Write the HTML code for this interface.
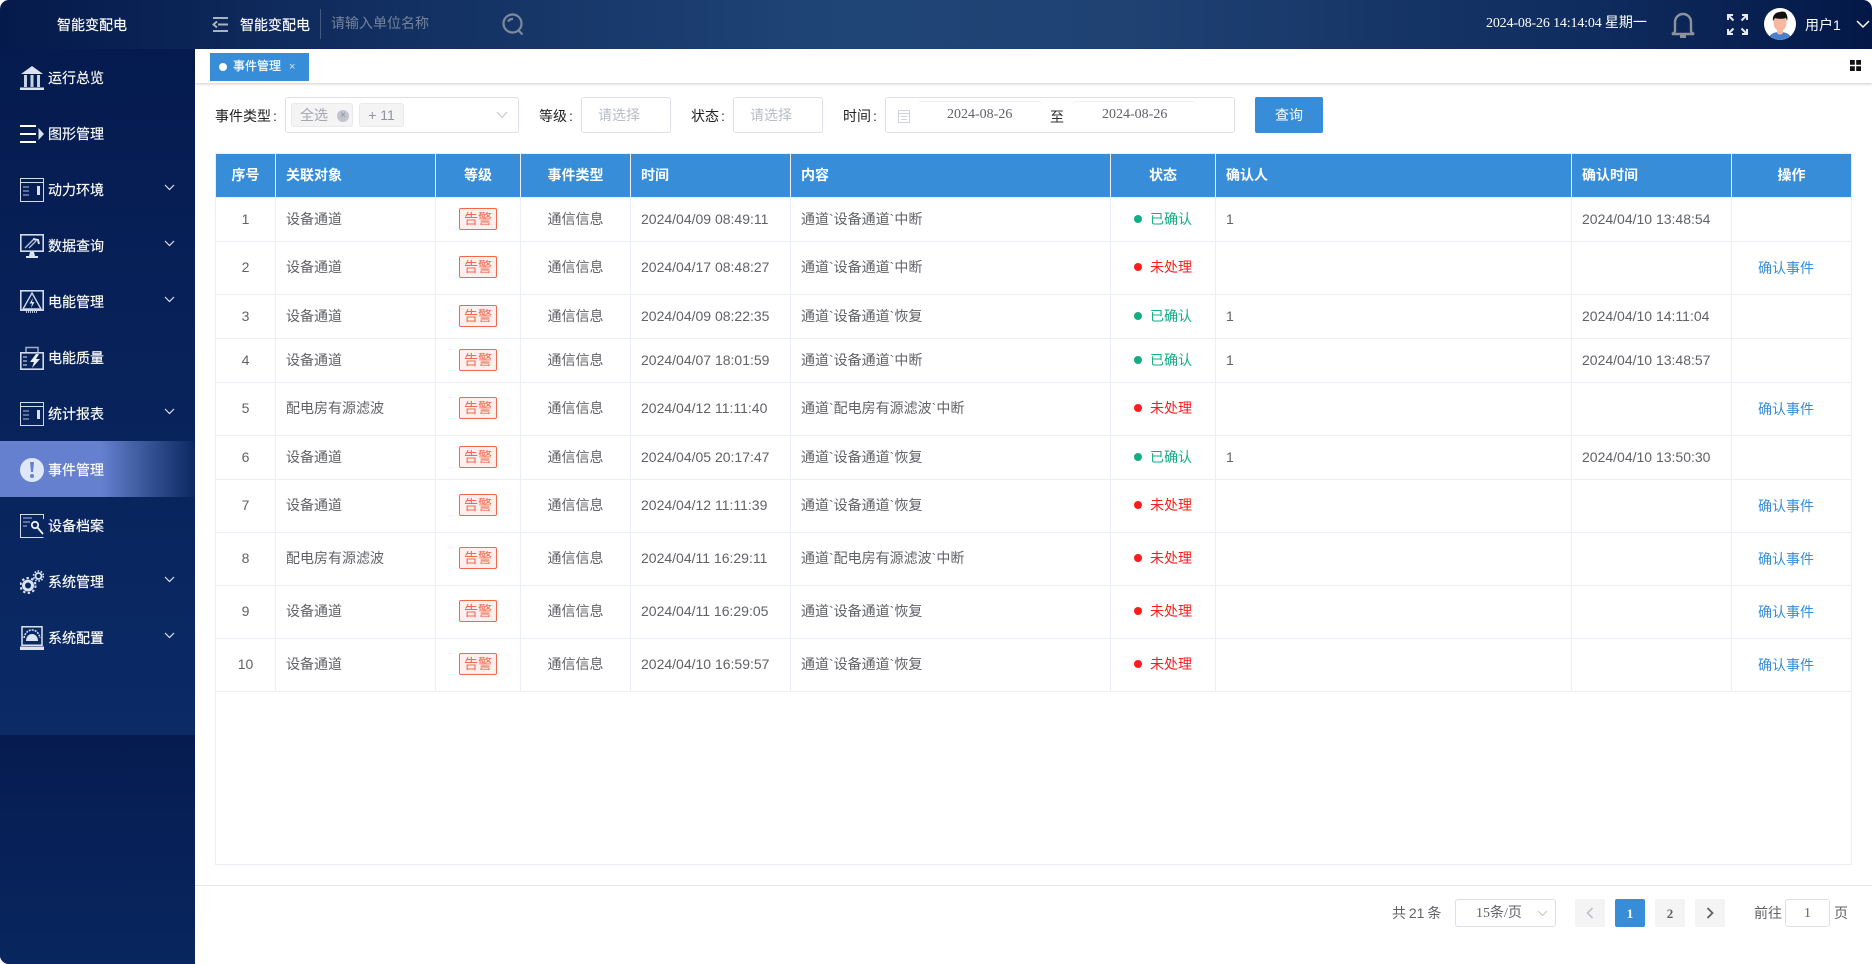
<!DOCTYPE html>
<html lang="zh-CN"><head><meta charset="utf-8"><title>智能变配电</title>
<style>
*{box-sizing:border-box;margin:0;padding:0}
html,body{width:1872px;height:964px;overflow:hidden;background:#fff}
body{font:14px/1.2 "Liberation Sans","Noto Sans CJK SC",sans-serif;color:#606266;position:relative}
.a{position:absolute;white-space:nowrap}
#frame{position:absolute;inset:0;border-radius:9px;overflow:hidden;background:#fff}
#top{position:absolute;left:0;top:0;width:1872px;height:49px;background:linear-gradient(90deg,#041a4b 0,#0f2a5c 15%,#1f4576 45%,#1f4273 60%,#0f2c5e 85%,#031847 100%)}
#side{position:absolute;left:0;top:49px;width:195px;height:915px;background:#061c50}
#sidetop{position:absolute;left:0;top:0;width:195px;height:686px;background:linear-gradient(180deg,#051b4f 0,#0b2a66 100%)}
#sidebot{position:absolute;left:0;top:686px;width:195px;height:229px;background:linear-gradient(180deg,#061c50 0,#08265f 100%)}
.it{position:absolute;left:0;width:195px;height:56px;color:#fff}
.it span{position:absolute;left:48px;top:20px;line-height:18px;font-size:14px;-webkit-text-stroke:.15px #fff}
.it svg.ic{position:absolute;left:20px;top:17px}
.it svg.ch{position:absolute;left:164px;top:23px}
.on{background:linear-gradient(90deg,#6580cf 0,#6580cf 52%,#3d5b9e 72%,#0c2860 100%)}
#tabs{position:absolute;left:195px;top:49px;width:1677px;height:34px;background:#fff;box-shadow:0 1px 3px rgba(0,0,0,.2)}
.box{position:absolute;border:1px solid #dcdfe6;border-radius:3px;background:#fff;height:36px;top:97px}
.lbl{position:absolute;top:107px;line-height:18px;color:#222;white-space:nowrap}
.lbl b{font-weight:400;margin-left:2px}
.ph{position:absolute;top:106px;line-height:18px;color:#b8bcc6}
table{position:absolute;left:215px;top:153px;width:1637px;table-layout:fixed;border-collapse:separate;border-spacing:0}
th{background:#378dd8;color:#fff;font-weight:700;height:45px;border-right:1px solid #ebeef5;border-top:1px solid #ebeef5;border-bottom:1px solid #ebeef5;text-align:left;padding:0 0 0 10px;font-size:14px}
th.c,td.c{text-align:center;padding:0 0 2px 0}
th.c{padding:0}
td{border-right:1px solid #ebeef5;border-bottom:1px solid #ebeef5;padding:0 0 2px 10px;color:#606266;font-size:14px;white-space:nowrap;line-height:16px}
tr>*:first-child{border-left:1px solid #ebeef5}
.s td{height:44px}.t td{height:53px}
.tg{display:inline-block;width:38px;height:22px;line-height:20px;border:1px solid #f5674a;border-radius:2px;background:#fff0ef;color:#f5674a;text-align:center;vertical-align:middle}
.d{display:inline-block;width:8px;height:8px;border-radius:50%;margin:0 8px 2px 0;vertical-align:middle}
.g{color:#13ad85;padding-left:23px!important}.g .d{background:#13ad85}
.r{color:#fd1c1c;padding-left:23px!important}.r .d{background:#fd1c1c}
.op{color:#378dd8;padding-left:26px!important;padding-bottom:1px!important}
.pg{position:absolute;top:899px;height:28px;width:30px;border-radius:2px;background:#f4f4f5;text-align:center;line-height:28px;font-family:"Liberation Serif",serif;font-weight:700;font-size:13px;color:#606266}
</style></head><body>
<div id="frame">
<div id="top"></div>
<div class="a" style="left:57px;top:16px;color:#fff;line-height:18px;-webkit-text-stroke:.15px #fff">智能变配电</div>
<svg class="a" style="left:212px;top:16px" width="17" height="17" viewBox="0 0 17 17" fill="none" stroke="#a8b3c4" stroke-width="2"><path d="M1 2h15M6 8.500h10M1 15h15M5 5.500 1.500 8.500 5 11.500"/></svg>
<div class="a" style="left:240px;top:16px;color:#fff;line-height:18px;-webkit-text-stroke:.15px #fff">智能变配电</div>
<div class="a" style="left:320px;top:9px;width:1px;height:30px;background:#41597f"></div>
<div class="a" style="left:331px;top:14px;color:#75839a;line-height:18px">请输入单位名称</div>
<svg class="a" style="left:501px;top:12px" width="24" height="24" viewBox="0 0 24 24" fill="none" stroke="#7d8a9c" stroke-width="2.200"><circle cx="11.500" cy="11.500" r="9"/><path d="M7 9.500a5.500 5.500 0 0 1 5-2.500M17 18l4.500 4.500"/></svg>
<div class="a" style="left:1486px;top:15px;color:#fff;line-height:18px;font-family:'Liberation Serif','Noto Sans CJK SC',serif"><span style="letter-spacing:-.16px">2024-08-26 14:14:04 </span>星期一</div>
<svg class="a" style="left:1670px;top:12px" width="26" height="26" viewBox="0 0 26 26" fill="none" stroke="#8d929b" stroke-width="2.400"><path d="M5 19V10a8 8 0 0 1 16 0v9c0 1 1 2 3 3H2c2-1 3-2 3-3z"/><path d="M10 24.500h6" stroke-width="3"/></svg>
<svg class="a" style="left:1727px;top:14px" width="21" height="21" viewBox="0 0 21 21" fill="none" stroke="#e6eaf0" stroke-width="2"><path d="M1 6V1h5M1 1l5.500 5.500M20 6V1h-5M20 1l-5.500 5.500M1 15v5h5M1 20l5.500-5.500M20 15v5h-5M20 20l-5.500-5.500"/></svg>
<svg class="a" style="left:1764px;top:8px" width="32" height="32" viewBox="0 0 32 32"><defs><clipPath id="av"><circle cx="16" cy="16" r="16"/></clipPath></defs><g clip-path="url(#av)"><rect width="32" height="32" fill="#fff"/><path d="M4 32c1-6 6-8 12-8s11 2 12 8z" fill="#4a7fd0"/><path d="M13 21h6v4c-1 2-5 2-6 0z" fill="#f0b9a0"/><ellipse cx="16" cy="15" rx="6.500" ry="8" fill="#f5b8a0"/><path d="M9 13c-1-6 3-9 7-9 2-1 4 0 5 0 2 2 3 5 2 9l-1-3c-3 1-8 1-11 0z" fill="#111"/></g></svg>
<div class="a" style="left:1805px;top:16px;color:#fff;line-height:18px">用户1</div>
<svg class="a" style="left:1856px;top:20px" width="14" height="9" viewBox="0 0 14 9" fill="none" stroke="#fff" stroke-width="1.500"><path d="M1 1l6 6 6-6"/></svg>

<div id="side"><div id="sidetop"></div><div id="sidebot"></div></div>

<div class="it" style="top:49px"><svg class="ic" width="24" height="24" viewBox="0 0 24 24" fill="#dbe3f0"><path d="M12 0 23 8H1z"/><path d="M4 9h3v12H4zM10.500 9h3v12h-3zM17 9h3v12h-3z" fill="#c5d0e2"/><path d="M0 21.500h24V24H0z"/></svg><span>运行总览</span></div>
<div class="it" style="top:105px"><svg class="ic" width="24" height="24" viewBox="0 0 24 24" fill="#fff"><path d="M0 3h16v2H0zM0 11h16v2H0zM0 19h16v2H0z"/><path d="M18.500 6 24 12l-5.500 6z" fill="#dbe3f0"/></svg><span>图形管理</span></div>
<div class="it" style="top:161px"><svg class="ic" width="24" height="24" viewBox="0 0 24 24" fill="none" stroke="#d0daea"><path d="M.5.500h23v23H.500zM.5 4.500h23"/><path d="M3 9h6M3 13h6M3 17h6" stroke="#8fa0bd" stroke-width="1.300"/><path d="M17 8h3v9h-3z" fill="#dbe3f0" stroke="none"/></svg><span>动力环境</span><svg class="ch" width="11" height="7" viewBox="0 0 11 7" fill="none" stroke="#dbe3f0" stroke-width="1.200"><path d="M1 1l4.500 4.500L10 1"/></svg></div>
<div class="it" style="top:217px"><svg class="ic" width="24" height="24" viewBox="0 0 24 24" fill="none" stroke="#d0daea"><path d="M.8.800h22.400v16.400H.800z" stroke-width="1.600"/><path d="M5 14 14 5M9 14l7-7" stroke="#b7c4d9" stroke-width="1.300"/><path d="M13 5l5 1 1 4" stroke="#dbe3f0" stroke-width="2"/><path d="M10 18h4l1 4H9zM6 22h12v2H6z" fill="#dbe3f0" stroke="none"/></svg><span>数据查询</span><svg class="ch" width="11" height="7" viewBox="0 0 11 7" fill="none" stroke="#dbe3f0" stroke-width="1.200"><path d="M1 1l4.500 4.500L10 1"/></svg></div>
<div class="it" style="top:273px"><svg class="ic" width="24" height="24" viewBox="0 0 24 24" fill="none" stroke="#d0daea"><path d="M.8.800h22.400v19.400H.800z" stroke-width="1.600"/><path d="M12 3 21 19H3z" stroke-width="1.400"/><path d="M13 8l-3.500 5.500h2.500L11 18l3.500-6H12z" fill="#dbe3f0" stroke="none"/><path d="M6 22h12" stroke-dasharray="1 1" stroke-width="2" stroke="#b7c4d9"/></svg><span>电能管理</span><svg class="ch" width="11" height="7" viewBox="0 0 11 7" fill="none" stroke="#dbe3f0" stroke-width="1.200"><path d="M1 1l4.500 4.500L10 1"/></svg></div>
<div class="it" style="top:329px"><svg class="ic" width="24" height="24" viewBox="0 0 24 24" fill="none" stroke="#d0daea"><path d="M.8 6.800h22.400v16.400H.800z" stroke-width="1.600"/><path d="M6 6V1.500h12V6" stroke="#9fafc8" stroke-width="1.500"/><path d="M3 11h4M3 15h4M3 19h4" stroke="#b7c4d9" stroke-width="1.300"/><path d="M16 8l-6 8h4l-2 6 8-9h-4l3-5z" fill="#eef2f8" stroke="none"/></svg><span>电能质量</span></div>
<div class="it" style="top:385px"><svg class="ic" width="24" height="24" viewBox="0 0 24 24" fill="none" stroke="#d0daea"><path d="M.5.500h23v23H.500zM.5 4.500h23"/><path d="M3 9h6M3 13h6M3 17h6" stroke="#8fa0bd" stroke-width="1.300"/><path d="M17 8h3v9h-3z" fill="#dbe3f0" stroke="none"/></svg><span>统计报表</span><svg class="ch" width="11" height="7" viewBox="0 0 11 7" fill="none" stroke="#dbe3f0" stroke-width="1.200"><path d="M1 1l4.500 4.500L10 1"/></svg></div>
<div class="it on" style="top:441px"><svg class="ic" width="24" height="24" viewBox="0 0 24 24"><circle cx="12" cy="12" r="12" fill="#dfe8f6"/><path d="M10 4h4l-1 10h-2z" fill="#6580cf"/><circle cx="12" cy="18" r="2" fill="#6580cf"/></svg><span>事件管理</span></div>
<div class="it" style="top:497px"><svg class="ic" width="24" height="24" viewBox="0 0 24 24" fill="none" stroke="#d0daea"><path d="M23.500 5V.500H.500v23H23.500"/><path d="M3 4h9M3 8h7M3 12h4" stroke="#8fa0bd" stroke-width="1.200"/><circle cx="15" cy="11" r="3.200" stroke-width="1.800" stroke="#eef2f8"/><path d="M17.500 13.500 23 20" stroke-width="1.800" stroke="#eef2f8"/></svg><span>设备档案</span></div>
<div class="it" style="top:553px"><svg class="ic" width="24" height="24" viewBox="0 0 24 24" fill="none" stroke="#dbe3f0"><circle cx="8" cy="15.500" r="4.500" stroke-width="3"/><circle cx="8" cy="15.500" r="7.500" stroke-width="2" stroke-dasharray="2.400 2.400"/><circle cx="18.500" cy="6" r="3" stroke-width="1.800"/><circle cx="18.500" cy="6" r="5" stroke-width="1.600" stroke-dasharray="1.600 1.600"/></svg><span>系统管理</span><svg class="ch" width="11" height="7" viewBox="0 0 11 7" fill="none" stroke="#dbe3f0" stroke-width="1.200"><path d="M1 1l4.500 4.500L10 1"/></svg></div>
<div class="it" style="top:609px"><svg class="ic" width="24" height="24" viewBox="0 0 24 24" fill="none" stroke="#dbe3f0"><path d="M2 .8h20v18.400H2z" stroke-width="1.500"/><path d="M6 15c0-4 2.500-7 6-7s6 3 6 7z" fill="#dbe3f0" stroke="none"/><path d="M4 12c1-5 4-8 8-8s7 3 8 8" stroke-width="1.500" stroke-dasharray="2 1"/><path d="M0 20.500h24V24H0z" fill="#dbe3f0" stroke="none"/></svg><span>系统配置</span><svg class="ch" width="11" height="7" viewBox="0 0 11 7" fill="none" stroke="#dbe3f0" stroke-width="1.200"><path d="M1 1l4.500 4.500L10 1"/></svg></div>

<div id="tabs"></div>
<div class="a" style="left:210px;top:53px;width:99px;height:28px;background:#378dd8;color:#fff">
<i class="a" style="left:9px;top:10px;width:8px;height:8px;border-radius:50%;background:#fff"></i>
<span class="a" style="left:23px;top:5px;font-size:12px;line-height:16px;-webkit-text-stroke:.15px #fff">事件管理</span>
<span class="a" style="left:79px;top:6px;font-size:11px;line-height:16px;color:#d5e6f7">×</span></div>
<svg class="a" style="left:1850px;top:60px" width="11" height="11" viewBox="0 0 11 11" fill="#111"><path d="M0 0h4.800v4.800H0zM6.200 0H11v4.800H6.200zM0 6.200h4.800V11H0zM6.200 6.200H11V11H6.200z"/></svg>

<div class="lbl" style="left:215px">事件类型<b>:</b></div>
<div class="box" style="left:285px;width:234px"></div>
<div class="a" style="left:291px;top:103px;width:62px;height:24px;background:#f4f4f5;border:1px solid #e9e9eb;border-radius:3px;color:#a3a6ad;line-height:22px;padding-left:8px">全选<i class="a" style="left:45px;top:6px;width:12px;height:12px;border-radius:50%;background:#c0c4cc;color:#8b8f98;font:10px/12px 'Liberation Sans';text-align:center">×</i></div>
<div class="a" style="left:359px;top:103px;width:45px;height:24px;background:#f4f4f5;border:1px solid #e9e9eb;border-radius:3px;color:#909399;line-height:22px;text-align:center">+ 11</div>
<svg class="a" style="left:496px;top:111px" width="12" height="8" viewBox="0 0 12 8" fill="none" stroke="#c0c4cc"><path d="M1 1l5 5.500L11 1"/></svg>
<div class="lbl" style="left:539px">等级<b>:</b></div>
<div class="box" style="left:581px;width:90px"></div><div class="ph" style="left:598px">请选择</div>
<div class="lbl" style="left:691px">状态<b>:</b></div>
<div class="box" style="left:733px;width:90px"></div><div class="ph" style="left:750px">请选择</div>
<div class="lbl" style="left:843px">时间<b>:</b></div>
<div class="box" style="left:885px;width:350px"></div>
<svg class="a" style="left:897px;top:109px" width="14" height="14" viewBox="0 0 14 14" fill="none" stroke="#d0d3da"><path d="M1.500 1.500h11v12h-11zM1.500 4.500h11M4 7.500h6M4 10.500h6"/></svg>
<div class="a" style="left:916px;top:101px;width:128px;height:12px;border-top:1px solid #eef0f4;border-radius:6px 6px 0 0"></div>
<div class="a" style="left:1071px;top:101px;width:126px;height:12px;border-top:1px solid #eef0f4;border-radius:6px 6px 0 0"></div>
<div class="a" style="left:947px;top:106px;line-height:18px;font-family:'Liberation Serif',serif;color:#606266">2024-08-26</div>
<div class="a" style="left:1050px;top:108px;line-height:18px;color:#303133">至</div>
<div class="a" style="left:1102px;top:106px;line-height:18px;font-family:'Liberation Serif',serif;color:#606266">2024-08-26</div>
<div class="a" style="left:1255px;top:97px;width:68px;height:36px;background:#378dd8;border-radius:2px;color:#fff;text-align:center;line-height:36px">查询</div>

<table><colgroup><col style="width:61px"><col style="width:160px"><col style="width:85px"><col style="width:110px"><col style="width:160px"><col style="width:320px"><col style="width:105px"><col style="width:356px"><col style="width:160px"><col style="width:120px"></colgroup>
<tr><th class="c">序号</th><th>关联对象</th><th class="c">等级</th><th class="c">事件类型</th><th>时间</th><th>内容</th><th class="c">状态</th><th>确认人</th><th>确认时间</th><th class="c">操作</th></tr>
<tr class="s"><td class="c">1</td><td>设备通道</td><td class="c"><span class="tg">告警</span></td><td class="c">通信信息</td><td>2024/04/09 08:49:11</td><td>通道`设备通道`中断</td><td class="g"><i class="d"></i>已确认</td><td>1</td><td>2024/04/10 13:48:54</td><td></td></tr>
<tr class="t"><td class="c">2</td><td>设备通道</td><td class="c"><span class="tg">告警</span></td><td class="c">通信信息</td><td>2024/04/17 08:48:27</td><td>通道`设备通道`中断</td><td class="r"><i class="d"></i>未处理</td><td></td><td></td><td class="op">确认事件</td></tr>
<tr class="s"><td class="c">3</td><td>设备通道</td><td class="c"><span class="tg">告警</span></td><td class="c">通信信息</td><td>2024/04/09 08:22:35</td><td>通道`设备通道`恢复</td><td class="g"><i class="d"></i>已确认</td><td>1</td><td>2024/04/10 14:11:04</td><td></td></tr>
<tr class="s"><td class="c">4</td><td>设备通道</td><td class="c"><span class="tg">告警</span></td><td class="c">通信信息</td><td>2024/04/07 18:01:59</td><td>通道`设备通道`中断</td><td class="g"><i class="d"></i>已确认</td><td>1</td><td>2024/04/10 13:48:57</td><td></td></tr>
<tr class="t"><td class="c">5</td><td>配电房有源滤波</td><td class="c"><span class="tg">告警</span></td><td class="c">通信信息</td><td>2024/04/12 11:11:40</td><td>通道`配电房有源滤波`中断</td><td class="r"><i class="d"></i>未处理</td><td></td><td></td><td class="op">确认事件</td></tr>
<tr class="s"><td class="c">6</td><td>设备通道</td><td class="c"><span class="tg">告警</span></td><td class="c">通信信息</td><td>2024/04/05 20:17:47</td><td>通道`设备通道`恢复</td><td class="g"><i class="d"></i>已确认</td><td>1</td><td>2024/04/10 13:50:30</td><td></td></tr>
<tr class="t"><td class="c">7</td><td>设备通道</td><td class="c"><span class="tg">告警</span></td><td class="c">通信信息</td><td>2024/04/12 11:11:39</td><td>通道`设备通道`恢复</td><td class="r"><i class="d"></i>未处理</td><td></td><td></td><td class="op">确认事件</td></tr>
<tr class="t"><td class="c">8</td><td>配电房有源滤波</td><td class="c"><span class="tg">告警</span></td><td class="c">通信信息</td><td>2024/04/11 16:29:11</td><td>通道`配电房有源滤波`中断</td><td class="r"><i class="d"></i>未处理</td><td></td><td></td><td class="op">确认事件</td></tr>
<tr class="t"><td class="c">9</td><td>设备通道</td><td class="c"><span class="tg">告警</span></td><td class="c">通信信息</td><td>2024/04/11 16:29:05</td><td>通道`设备通道`恢复</td><td class="r"><i class="d"></i>未处理</td><td></td><td></td><td class="op">确认事件</td></tr>
<tr class="t"><td class="c">10</td><td>设备通道</td><td class="c"><span class="tg">告警</span></td><td class="c">通信信息</td><td>2024/04/10 16:59:57</td><td>通道`设备通道`恢复</td><td class="r"><i class="d"></i>未处理</td><td></td><td></td><td class="op">确认事件</td></tr>
</table>
<div class="a" style="left:215px;top:691px;width:1637px;height:174px;border:1px solid #ebeef5;border-top:0"></div>
<div class="a" style="left:195px;top:885px;width:1677px;height:1px;background:#e4e7ed"></div>

<div class="a" style="left:1392px;top:904px;line-height:18px;word-spacing:-1px">共 21 条</div>
<div class="a" style="left:1455px;top:899px;width:101px;height:28px;border:1px solid #dcdfe6;border-radius:3px;font-family:'Liberation Serif','Noto Sans CJK SC',serif;line-height:28px;padding-left:20px">15条/页</div>
<svg class="a" style="left:1537px;top:910px" width="11" height="7" viewBox="0 0 11 7" fill="none" stroke="#c0c4cc"><path d="M1 1l4.500 4.500L10 1"/></svg>
<div class="pg" style="left:1575px"><svg width="8" height="12" viewBox="0 0 8 12" fill="none" stroke="#c0c4cc" stroke-width="1.800" style="margin-top:8px"><path d="M6.500 1 1.500 6l5 5"/></svg></div>
<div class="pg" style="left:1615px;background:#378dd8;color:#fff;line-height:30px">1</div>
<div class="pg" style="left:1655px;line-height:30px">2</div>
<div class="pg" style="left:1695px"><svg width="8" height="12" viewBox="0 0 8 12" fill="none" stroke="#606266" stroke-width="1.800" style="margin-top:8px"><path d="M1.500 1l5 5-5 5"/></svg></div>
<div class="a" style="left:1754px;top:904px;line-height:18px">前往</div>
<div class="a" style="left:1785px;top:899px;width:45px;height:28px;border:1px solid #dcdfe6;border-radius:3px;text-align:center;line-height:28px;font-family:'Liberation Serif',serif">1</div>
<div class="a" style="left:1834px;top:904px;line-height:18px">页</div>
</div>
</body></html>
